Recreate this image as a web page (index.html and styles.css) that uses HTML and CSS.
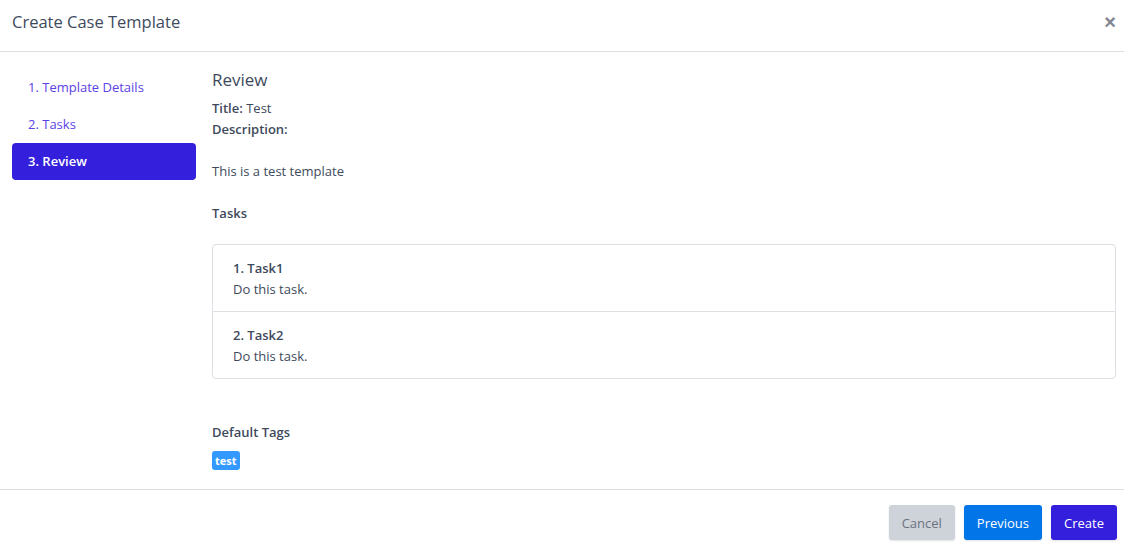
FILE: index.html
```html
<!DOCTYPE html>
<html lang="en">
<head>
  <meta charset="utf-8">
  <title>Create Case Template</title>
  <link rel="stylesheet" href="styles.css">
</head>
<body>
  <div class="modal">
    <div class="modal-header">
      <h5 class="modal-title">Create Case Template</h5>
      <button class="close" type="button" aria-label="Close">&times;</button>
    </div>

    <div class="modal-body">
      <ul class="steps">
        <li><a class="step" href="#">1. Template Details</a></li>
        <li><a class="step" href="#">2. Tasks</a></li>
        <li><a class="step active" href="#">3. Review</a></li>
      </ul>

      <div class="review">
        <h4 class="review-title">Review</h4>
        <div class="field"><b>Title:</b> Test</div>
        <div class="field"><b>Description:</b></div>
        <p class="desc">This is a test template</p>

        <h6 class="section">Tasks</h6>
        <ul class="task-list">
          <li class="task">
            <div class="task-name">1. Task1</div>
            <div class="task-desc">Do this task.</div>
          </li>
          <li class="task">
            <div class="task-name">2. Task2</div>
            <div class="task-desc">Do this task.</div>
          </li>
        </ul>

        <h6 class="section tags-title">Default Tags</h6>
        <span class="badge">test</span>
      </div>
    </div>

    <div class="modal-footer">
      <button class="btn btn-light" type="button">Cancel</button>
      <button class="btn btn-blue" type="button">Previous</button>
      <button class="btn btn-primary" type="button">Create</button>
    </div>
  </div>
</body>
</html>
```

FILE: styles.css
```css
* {
  box-sizing: border-box;
}
body {
  margin: 0;
  font-family: "Segoe UI", "Open Sans", "Liberation Sans", sans-serif;
  font-size: 14px;
  color: #3e4a5c;
  background: #fff;
}
.modal {
  height: 549px;
  display: flex;
  flex-direction: column;
}
.modal-header {
  height: 52px;
  display: flex;
  align-items: center;
  justify-content: space-between;
  padding: 0 8px 8px 12px;
  border-bottom: 1px solid #dcdfe3;
}
.modal-title {
  margin: 0;
  font-size: 16.5px;
  font-weight: 500;
  color: #3e4a5c;
}
.close {
  border: 0;
  background: none;
  padding: 0;
  font-size: 20px;
  line-height: 1;
  color: #808590;
  font-weight: bold;
  cursor: pointer;
}
.modal-body {
  flex: 1;
  display: flex;
  padding: 15px 8px 0 12px;
}
.steps {
  list-style: none;
  margin: 0;
  padding: 2px 0 0;
  width: 184px;
  flex-shrink: 0;
}
.step {
  display: block;
  height: 37px;
  line-height: 37px;
  padding: 0 16px;
  border-radius: 4px;
  color: #5a43e6;
  text-decoration: none;
  font-size: 13px;
}
.step.active {
  background: #3420dc;
  color: #fff;
  font-weight: 600;
}
.review {
  flex: 1;
  margin-left: 16px;
}
.review-title {
  margin: 1px 0 6px;
  font-size: 17px;
  font-weight: 500;
  line-height: 24px;
}
.field {
  font-size: 13px;
  line-height: 21px;
}
.field b {
  font-weight: 600;
}
.desc {
  margin: 21px 0 0;
  font-size: 13px;
  line-height: 21px;
}
.section {
  margin: 21px 0 0;
  font-size: 13px;
  font-weight: 600;
  line-height: 21px;
}
.task-list {
  list-style: none;
  margin: 20px 0 0;
  padding: 0;
  border: 1px solid #dcdfe3;
  border-radius: 4px;
}
.task {
  height: 66px;
  padding: 13px 20px;
  font-size: 13px;
  line-height: 21px;
}
.task + .task {
  height: 67px;
  border-top: 1px solid #dcdfe3;
}
.task-name {
  font-weight: 600;
}
.tags-title {
  margin-top: 43px;
}
.badge {
  display: inline-block;
  margin-top: 8px;
  padding: 0 3px;
  height: 19px;
  line-height: 19px;
  border-radius: 3px;
  background: #3399ff;
  color: #fff;
  font-size: 11px;
  font-weight: 700;
}
.modal-footer {
  height: 60px;
  display: flex;
  justify-content: flex-end;
  align-items: center;
  gap: 9px;
  padding: 6px 7px 0 0;
  border-top: 1px solid #dcdfe3;
}
.btn {
  height: 35px;
  padding: 0 13px;
  border: 0;
  border-radius: 3px;
  font-family: inherit;
  font-size: 13px;
  cursor: pointer;
  box-shadow: 0 1px 2px rgba(0, 0, 0, 0.12);
}
.btn-light {
  background: #ced3da;
  color: #6a7280;
}
.btn-blue {
  background: #0275e8;
  color: #fff;
  font-weight: 500;
}
.btn-primary {
  background: #3420dc;
  color: #fff;
  font-weight: 500;
}
```
